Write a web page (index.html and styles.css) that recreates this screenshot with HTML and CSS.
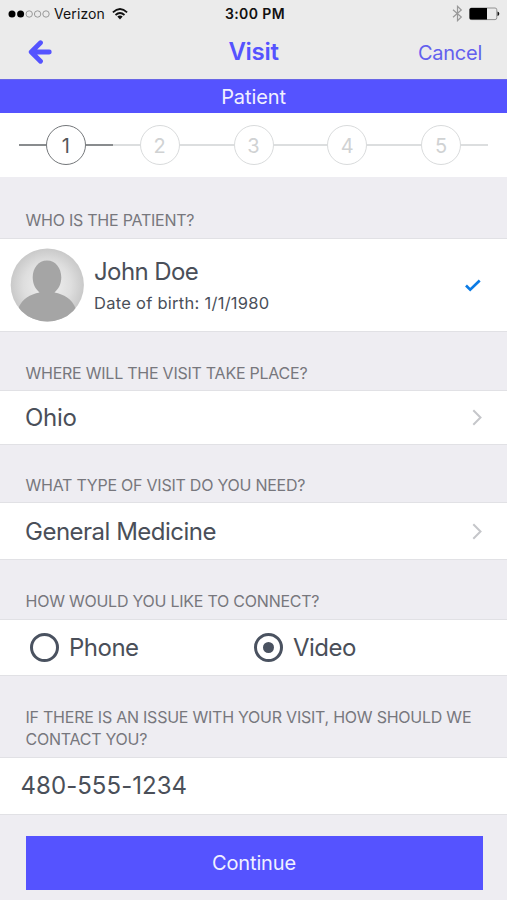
FILE: index.html
```html
<!DOCTYPE html>
<html lang="en">
<head>
<meta charset="utf-8">
<title>Visit</title>
<link rel="stylesheet" href="styles.css">
</head>
<body>
<div class="status">
  <div class="carrier">
    <svg class="signal" width="42" height="10" viewBox="0 0 42 10"><g fill="#000"><circle cx="4" cy="5" r="3.5"/><circle cx="12.6" cy="5" r="3.5"/></g><g fill="none" stroke="#999" stroke-width="1"><circle cx="21.2" cy="5" r="3.2"/><circle cx="29.6" cy="5" r="3.2"/><circle cx="38" cy="5" r="3.2"/></g></svg>
    <span class="network">Verizon</span>
    <svg class="wifi" width="16" height="12" viewBox="0 0 16 12"><g fill="none" stroke="#111" stroke-width="1.8"><path d="M.9 4.3Q8-2.2 15.1 4.3"/><path d="M3.5 7Q8 2.9 12.5 7"/></g><path d="M5.3 8.6Q8 6.5 10.7 8.6L8 11.5Z" fill="#111"/></svg>
  </div>
  <div class="time">3:00 PM</div>
  <div class="power">
    <svg width="11" height="17" viewBox="0 0 11 17"><path d="M1 4.7L9.3 12 5.5 15.7V1.3L9.3 5 1 12.3" fill="none" stroke="#999" stroke-width="1.2"/></svg>
    <svg width="31" height="14" viewBox="0 0 31 14"><rect x=".8" y="1" width="27" height="11.6" rx="1.8" fill="none" stroke="#888" stroke-width=".9"/><path d="M2 1H18V12.6H2Q.5 12.6.5 11V2.5Q.5 1 2 1Z" fill="#000"/><path d="M28.5 4.5Q30.3 5 30.3 6.8T28.5 9.1Z" fill="#111"/></svg>
  </div>
</div>
<header class="nav">
  <svg class="back" width="24" height="24" viewBox="0 0 24 24"><path d="M12.500 2.800L3.200 12l9.300 9.200M4 12H21.300" fill="none" stroke="#5553ff" stroke-width="4.800" stroke-linecap="round" stroke-linejoin="round"/></svg>
  <h1 class="title">Visit</h1>
  <span class="cancel">Cancel</span>
</header>
<div class="band"><span>Patient</span></div>
<div class="steps">
  <div class="step active"><span class="num">1</span></div>
  <div class="step"><span class="num">2</span></div>
  <div class="step"><span class="num">3</span></div>
  <div class="step"><span class="num">4</span></div>
  <div class="step"><span class="num">5</span></div>
</div>
<h2 class="label who"><span>WHO IS THE PATIENT?</span></h2>
<div class="row patient">
  <svg class="avatar" width="74" height="74" viewBox="0 0 74 74">
    <defs><radialGradient id="bg"><stop offset="0" stop-color="#f2f2f2"/><stop offset=".65" stop-color="#dedede"/><stop offset="1" stop-color="#c9c9c9"/></radialGradient><clipPath id="disc"><circle cx="37.300" cy="37" r="36.600"/></clipPath></defs>
    <circle cx="37.300" cy="37" r="36.600" fill="url(#bg)"/>
    <path clip-path="url(#disc)" fill="#a5a5a5" d="M37 12.500C45.500 12.500 51.300 20 51.300 29.500C51.300 36 48.500 41 44.500 44.500C54 46.500 61.500 50 66 61V74H8V61C12.500 50 20 46.500 29.500 44.500C25.500 41 22.700 36 22.700 29.500C22.700 20 28.500 12.500 37 12.500Z"/>
  </svg>
  <div class="details"><div class="name"><span>John Doe</span></div><div class="birth"><span>Date of birth: 1/1/1980</span></div></div>
  <svg class="check" width="16" height="13" viewBox="0 0 16 13"><path d="M1 6.500L5.200 10.600 14.700 1.500" fill="none" stroke="#0b7be5" stroke-width="2.700"/></svg>
</div>
<h2 class="label where"><span>WHERE WILL THE VISIT TAKE PLACE?</span></h2>
<div class="row place"><span class="ohio">Ohio</span><svg width="10" height="17" viewBox="0 0 10 17"><path d="M1.300 1.300L8.500 8.500 1.300 15.700" fill="none" stroke="#c5c6ca" stroke-width="2"/></svg></div>
<h2 class="label what"><span>WHAT TYPE OF VISIT DO YOU NEED?</span></h2>
<div class="row type"><span class="general">General Medicine</span><svg width="10" height="17" viewBox="0 0 10 17"><path d="M1.300 1.300L8.500 8.500 1.300 15.700" fill="none" stroke="#c5c6ca" stroke-width="2"/></svg></div>
<h2 class="label how"><span>HOW WOULD YOU LIKE TO CONNECT?</span></h2>
<div class="row connect">
  <div class="option"><i class="radio"></i><span class="phone">Phone</span></div>
  <div class="option"><i class="radio checked"></i><span class="video">Video</span></div>
</div>
<h2 class="label issue"><span>IF THERE IS AN ISSUE WITH YOUR VISIT, HOW SHOULD WE<br>CONTACT YOU?</span></h2>
<div class="row contact"><span class="number">480-555-1234</span></div>
<footer class="footer"><div class="continue"><span>Continue</span></div></footer>
</body>
</html>
```
FILE: styles.css
```css
* { box-sizing: border-box; }
body {
  margin: 0;
  height: 900px;
  overflow: hidden;
  background: #eeedf2;
  color: #4a4f59;
  font-family: Inter, "Liberation Sans", sans-serif;
  display: flex;
  flex-direction: column;
}
body > * { flex-shrink: 0; }
svg { display: block; flex: none; }
span { white-space: nowrap; }

.status {
  height: 27px;
  padding: 0 7px 0 8px;
  background: #ebebeb;
  color: #111;
  display: grid;
  grid-template-columns: 1fr auto 1fr;
  align-items: center;
}
.carrier { display: flex; align-items: center; }
.network { margin: 0 7px 0 4px; font-size: 14px; letter-spacing: .1px; }
.time { font-size: 14px; font-weight: 600; letter-spacing: .4px; margin-left: 2px; }
.power { display: flex; align-items: center; justify-content: flex-end; gap: 6px; }

.nav {
  height: 52px;
  padding: 0 25px 2px 28px;
  background: #ebebeb;
  color: #5553ff;
  display: grid;
  grid-template-columns: 1fr auto 1fr;
  align-items: center;
}
.title { margin: -2px 3px 0 0; font-size: 24px; font-weight: 600; letter-spacing: -.3px; }
.cancel { justify-self: end; font-size: 20px; color: #6360ee; letter-spacing: -.25px; margin-top: 1px; }

.band {
  height: 34px;
  background: #5553ff;
  border-top: 1px solid #6866e6;
  color: #f0f0ff;
  font-size: 20px;
  letter-spacing: -.1px;
  display: flex;
  align-items: center;
  justify-content: center;
}
.steps {
  height: 64px;
  padding: 0 19px;
  background: #fff;
  display: grid;
  grid-template-columns: repeat(5, 1fr);
  align-items: center;
}
.step { display: flex; align-items: center; color: #d0d2d3; }
.step::before, .step::after { content: ""; flex: 1; height: 2px; background: #dcdedf; }
.step.active { color: #55585b; }
.step.active::before, .step.active::after { background: #898c8e; }
.num {
  width: 40px;
  height: 40px;
  padding-top: 1px;
  border: 1.500px solid #d9dbdc;
  border-radius: 50%;
  font-size: 20px;
  display: flex;
  align-items: center;
  justify-content: center;
}
.active .num { border-color: #74777a; }

.label {
  margin: 0;
  padding: 0 25px 6px 25.500px;
  color: #77777d;
  font-size: 16px;
  font-weight: 400;
  line-height: 22px;
  letter-spacing: -.24px;
  display: flex;
  align-items: flex-end;
}
.who { height: 61px; padding-bottom: 7px; }
.where { height: 58px; }
.what { height: 57px; }
.how { height: 59px; padding-bottom: 7px; }
.issue { height: 81px; padding-bottom: 7px; }

.row {
  background: #fff;
  border-top: 1px solid #e1e1e5;
  border-bottom: 1px solid #e1e1e5;
  padding: 0 25px;
  font-size: 24px;
  line-height: 30px;
  letter-spacing: -.5px;
  display: flex;
  align-items: center;
  justify-content: space-between;
}
.patient { height: 94px; padding-left: 10px; padding-right: 26px; }
.details { flex: 1; margin: 3px 0 0 10px; }
.name { height: 33px; letter-spacing: -.6px; }
.birth { height: 26px; font-size: 16.500px; line-height: 26px; letter-spacing: .27px; }
.place { height: 55px; }
.ohio { letter-spacing: -.3px; }
.type { height: 58px; }
.general { padding-top: 2px; }
.connect { height: 57px; display: grid; grid-template-columns: 224px 1fr; padding-left: 30px; }
.option { display: flex; align-items: center; gap: 10px; }
.radio {
  width: 29px;
  height: 29px;
  border: 3px solid #4a5260;
  border-radius: 50%;
  display: grid;
  place-items: center;
}
.checked::after { content: ""; width: 11px; height: 11px; border-radius: 50%; background: #4a5260; }
.phone, .video { padding-top: 1px; }
.contact { height: 58px; padding-left: 20.500px; letter-spacing: .05px; }

.footer { padding: 21.400px 24.500px 0 25.500px; }
.continue {
  height: 54px;
  background: #5553ff;
  color: #f0f0ff;
  font-size: 20px;
  letter-spacing: -.15px;
  display: flex;
  align-items: center;
  justify-content: center;
}
```
